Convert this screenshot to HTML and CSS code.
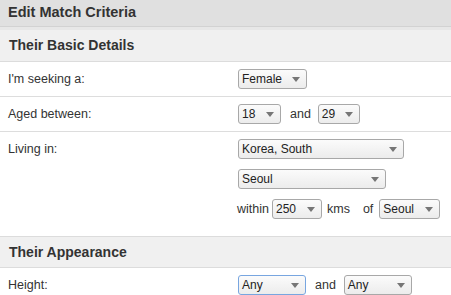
FILE: index.html
```html
<!DOCTYPE html>
<html>
<head>
<meta charset="utf-8">
<link rel="stylesheet" href="styles.css">
</head>
<body>
<div class="page">
  <div class="title">Edit Match Criteria</div>

  <div class="section first">Their Basic Details</div>

  <div class="row">
    <div class="label">I'm seeking a:</div>
    <div class="controls">
      <span class="sel w-female"><span class="val">Female</span><svg class="arr" width="8" height="5" viewBox="0 0 8 5"><path d="M0 0H8L4 5Z"/></svg></span>
    </div>
  </div>

  <div class="row">
    <div class="label">Aged between:</div>
    <div class="controls">
      <span class="sel w-age"><span class="val">18</span><svg class="arr" width="8" height="5" viewBox="0 0 8 5"><path d="M0 0H8L4 5Z"/></svg></span>
      <span class="txt and">and</span>
      <span class="sel w-age2"><span class="val">29</span><svg class="arr" width="8" height="5" viewBox="0 0 8 5"><path d="M0 0H8L4 5Z"/></svg></span>
    </div>
  </div>

  <div class="row last">
    <div class="label">Living in:</div>
    <div class="stack">
      <div class="controls">
        <span class="sel w-country"><span class="val">Korea, South</span><svg class="arr" width="8" height="5" viewBox="0 0 8 5"><path d="M0 0H8L4 5Z"/></svg></span>
      </div>
      <div class="controls">
        <span class="sel w-region"><span class="val">Seoul</span><svg class="arr" width="8" height="5" viewBox="0 0 8 5"><path d="M0 0H8L4 5Z"/></svg></span>
      </div>
      <div class="controls">
        <span class="txt within">within</span>
        <span class="sel w-dist"><span class="val">250</span><svg class="arr" width="8" height="5" viewBox="0 0 8 5"><path d="M0 0H8L4 5Z"/></svg></span>
        <span class="txt kms">kms</span>
        <span class="txt of">of</span>
        <span class="sel w-city"><span class="val">Seoul</span><svg class="arr" width="8" height="5" viewBox="0 0 8 5"><path d="M0 0H8L4 5Z"/></svg></span>
      </div>
    </div>
  </div>

  <div class="section">Their Appearance</div>

  <div class="row">
    <div class="label">Height:</div>
    <div class="controls">
      <span class="sel w-any focus"><span class="val">Any</span><svg class="arr" width="8" height="5" viewBox="0 0 8 5"><path d="M0 0H8L4 5Z"/></svg></span>
      <span class="txt and2">and</span>
      <span class="sel w-any"><span class="val">Any</span><svg class="arr" width="8" height="5" viewBox="0 0 8 5"><path d="M0 0H8L4 5Z"/></svg></span>
    </div>
  </div>
</div>
</body>
</html>
```

FILE: styles.css
```css
html, body {
  margin: 0;
  padding: 0;
  background: #ffffff;
}
body {
  font-family: "Liberation Sans", Arial, sans-serif;
  color: #333333;
  width: 451px;
  height: 295px;
  overflow: hidden;
}
.page {
  display: flex;
  flex-direction: column;
}
.title {
  height: 26px;
  line-height: 25px;
  background: #e0e0e0;
  border-bottom: 1px solid #d2d2d2;
  padding-left: 8px;
  font-size: 14.5px;
  font-weight: bold;
  color: #333;
}
.section {
  height: 30px;
  line-height: 30px;
  background: #f0f0f0;
  border-top: 1px solid #dcdcdc;
  border-bottom: 1px solid #dcdcdc;
  padding-left: 9px;
  font-size: 14px;
  font-weight: bold;
  color: #333;
  margin-top: 10px;
}
.section.first {
  margin-top: 0;
  border-top: 3px solid #e7e7e7;
  height: 31px;
  line-height: 31px;
}
.row {
  display: grid;
  grid-template-columns: 230px 1fr;
  padding: 7px 0 7px 8px;
  border-bottom: 1px solid #dddddd;
}
.row.last {
  border-bottom: none;
}
.label {
  font-size: 12.5px;
  line-height: 20px;
  color: #333;
}
.stack {
  display: flex;
  flex-direction: column;
  gap: 10px;
}
.controls {
  display: flex;
  align-items: center;
  height: 20px;
}
.txt {
  font-size: 12.5px;
  color: #333;
  line-height: 20px;
}
.and { margin: 0 7px 0 9px; }
.and2 { margin: 0 8px 0 9px; }
.within { margin: 0 3px 0 -1px; }
.kms { margin: 0 13px 0 5px; }
.of { margin-right: 6px; }
.sel {
  box-sizing: border-box;
  height: 20px;
  display: inline-flex;
  align-items: center;
  justify-content: space-between;
  border: 1px solid #a8a8a8;
  border-radius: 3px;
  background: linear-gradient(#fbfbfb, #ececec);
  padding-left: 3px;
  font-size: 12px;
  color: #222;
}
.sel.focus {
  border-color: #78a6e0;
}
.val {
  white-space: nowrap;
}
.arr {
  fill: #767676;
  margin-right: 6px;
}
.w-female { width: 69px; }
.w-age { width: 43px; }
.w-age2 { width: 42px; }
.w-country { width: 166px; }
.w-region { width: 148px; }
.w-dist { width: 50px; }
.w-city { width: 61px; }
.w-any { width: 68px; }
```
